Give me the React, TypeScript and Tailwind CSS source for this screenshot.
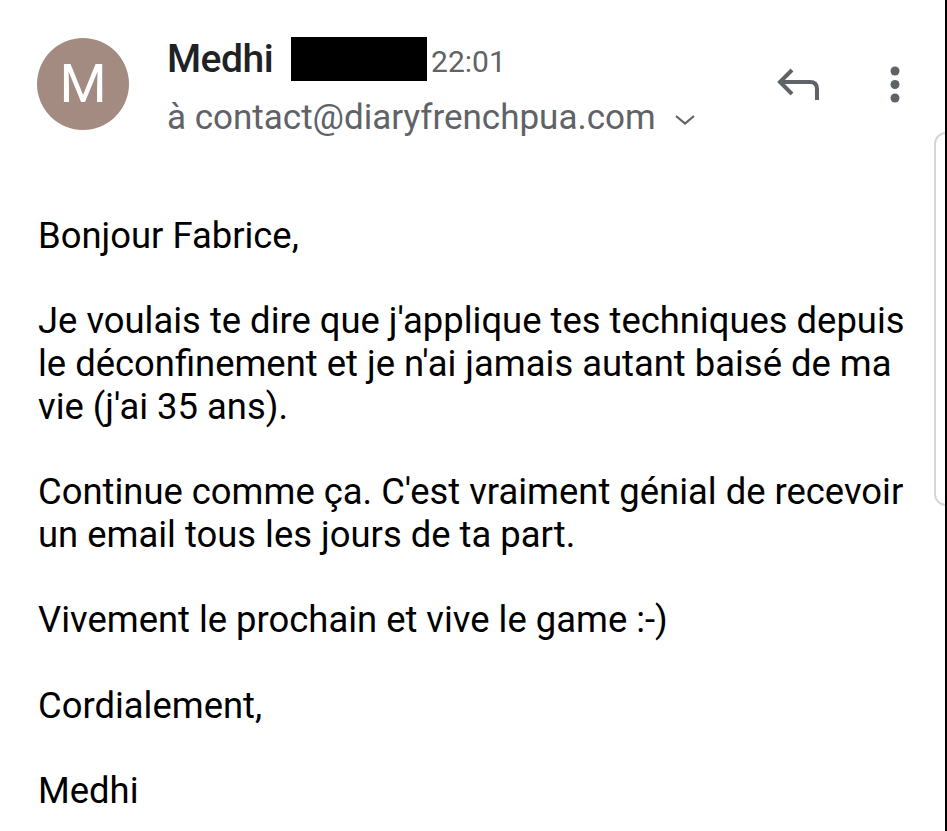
import React from 'react';

const paragraphs: string[][] = [
  ['Bonjour Fabrice,'],
  [
    "Je voulais te dire que j'applique tes techniques depuis",
    "le déconfinement et je n'ai jamais autant baisé de ma",
    "vie (j'ai 35 ans).",
  ],
  ["Continue comme ça. C'est vraiment génial de recevoir", 'un email tous les jours de ta part.'],
  ['Vivement le prochain et vive le game :-)'],
  ['Cordialement,'],
  ['Medhi'],
];

const ReplyIcon = () => (
  <svg width="46" height="40" viewBox="0 0 46 40" fill="none" stroke="#5f6368" strokeWidth="4" strokeLinecap="butt" strokeLinejoin="miter">
    <path d="M16 4 L4 16 L16 28" />
    <path d="M4 16 H34 Q41 16 41 23 V34" />
  </svg>
);

const MoreIcon = () => (
  <svg width="12" height="38" viewBox="0 0 12 38" fill="#5f6368">
    <circle cx="6" cy="5" r="4.5" />
    <circle cx="6" cy="18.5" r="4.5" />
    <circle cx="6" cy="32" r="4.5" />
  </svg>
);

const ChevronDown = () => (
  <svg width="22" height="12" viewBox="0 0 22 12" fill="none" stroke="#5f6368" strokeWidth="2.2">
    <path d="M2 2 L11 9.5 L20 2" />
  </svg>
);

export default function App() {
  return (
    <div className="relative w-[947px] h-[831px] bg-white overflow-hidden font-['Roboto','Liberation_Sans',sans-serif]">
      {/* header */}
      <div className="flex pl-[37px] pt-[38px]">
        <div className="w-[92px] h-[92px] rounded-full bg-[#a48b82] flex items-center justify-center text-white text-[54px] leading-none">
          M
        </div>
        <div className="ml-[38px] flex-1 -mt-[3px]">
          <div className="flex items-center h-[48px]">
            <span className="text-[39px] font-medium text-[#202124] tracking-[-0.5px]">Medhi</span>
            <span className="ml-[18px] w-[136px] h-[44px] bg-black" />
            <span className="ml-[4px] mt-[4px] text-[30px] text-[#5f6368]">22:01</span>
          </div>
          <div className="flex items-center h-[60px] mt-[5px]">
            <span className="text-[35px] text-[#5f6368]">à contact@diaryfrenchpua.com</span>
            <span className="ml-[18px] mt-[4px]">
              <ChevronDown />
            </span>
          </div>
        </div>
        <div className="flex items-start gap-[67px] pr-[46px] pt-[28px]">
          <ReplyIcon />
          <MoreIcon />
        </div>
      </div>

      {/* body */}
      <div className="pl-[38px] pt-[67px] text-[36.4px] leading-[42.7px] text-black">
        {paragraphs.map((lines, i) => (
          <p key={i} className="mb-[42.7px] whitespace-nowrap">
            {lines.map((line, j) => (
              <span key={j} className="block">
                {line}
              </span>
            ))}
          </p>
        ))}
      </div>

      {/* edge panel handle + black edge */}
      <div className="absolute left-[934px] top-[132px] w-[30px] h-[374px] rounded-[12px] border-2 border-[#d6d6d6]" />
      <div className="absolute right-0 top-0 w-[2px] h-full bg-black" />
    </div>
  );
}
